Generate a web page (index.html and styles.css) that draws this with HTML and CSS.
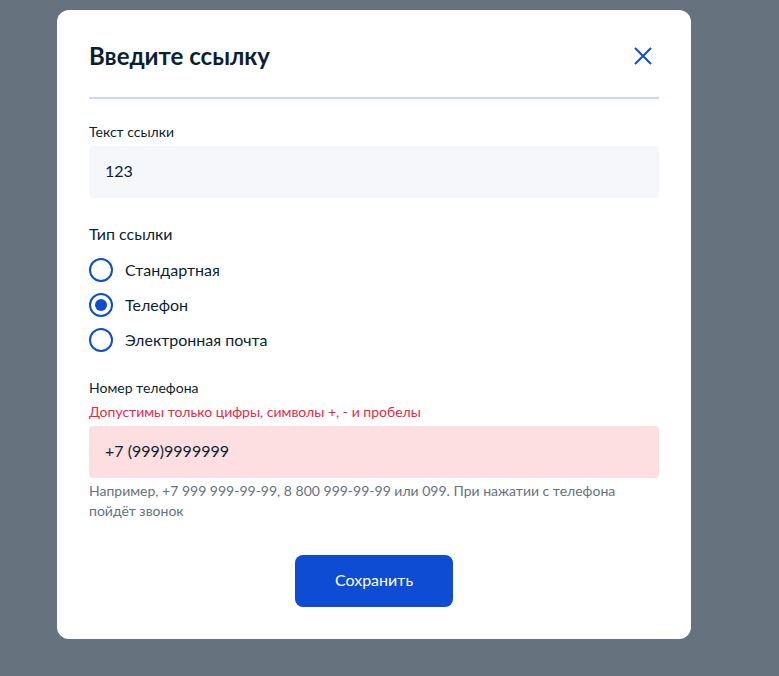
FILE: index.html
```html
<!DOCTYPE html>
<html>
<head>
    <title>Введите ссылку</title>
    <link rel="stylesheet" href="styles.css">
</head>
<body>
    <div class="modal">
        <div class="modal-header">
            <h2 class="modal-title">Введите ссылку</h2>
            <button type="button" class="close-btn" aria-label="Закрыть">
                <svg width="18" height="18" viewBox="0 0 18 18">
                    <path d="M1 1L17 17M17 1L1 17" stroke="#0d4cd3" stroke-width="2" fill="none"/>
                </svg>
            </button>
        </div>

        <form class="link-form">
            <label class="field-label" for="linkText">Текст ссылки</label>
            <input class="text-input" type="text" id="linkText" value="123">

            <div class="group-title">Тип ссылки</div>
            <div class="radio-list">
                <label class="radio-row">
                    <input type="radio" name="linkType" value="standard">
                    <span class="radio-mark"></span>
                    <span>Стандартная</span>
                </label>
                <label class="radio-row">
                    <input type="radio" name="linkType" value="phone" checked>
                    <span class="radio-mark"></span>
                    <span>Телефон</span>
                </label>
                <label class="radio-row">
                    <input type="radio" name="linkType" value="email">
                    <span class="radio-mark"></span>
                    <span>Электронная почта</span>
                </label>
            </div>

            <label class="field-label phone-label" for="phone">Номер телефона</label>
            <div class="error-text">Допустимы только цифры, символы +, - и пробелы</div>
            <input class="text-input has-error" type="text" id="phone" value="+7 (999)9999999">
            <p class="hint">Например, +7 999 999-99-99, 8 800 999-99-99 или 099. При нажатии с телефона пойдёт звонок</p>

            <div class="actions">
                <button type="button" class="save-btn">Сохранить</button>
            </div>
        </form>
    </div>
</body>
</html>
```

FILE: styles.css
```css
body {
    margin: 0;
    height: 676px;
    background: #66737f;
    font-family: Lato, "Noto Sans", sans-serif;
    color: #0b1f33;
    overflow: hidden;
}

.modal {
    width: 570px;
    margin: 10px 0 0 57px;
    padding: 32px;
    background: #fff;
    border-radius: 12px;
}

.modal-header {
    display: flex;
    align-items: center;
    justify-content: space-between;
    padding-bottom: 27px;
    border-bottom: 2px solid #ccd7f0;
}

.modal-title {
    margin: 0;
    font-size: 24px;
    line-height: 28px;
    font-weight: 700;
    color: #0b1f33;
}

.close-btn {
    display: flex;
    padding: 0;
    margin-right: 7px;
    border: none;
    background: none;
    cursor: pointer;
}

.link-form {
    display: flex;
    flex-direction: column;
    padding-top: 23px;
}

.field-label {
    font-size: 14px;
    line-height: 20px;
    margin-bottom: 4px;
}

.text-input {
    height: 52px;
    box-sizing: border-box;
    padding: 0 16px 3px;
    border: none;
    border-radius: 4px;
    background: #f5f7fa;
    font-family: Lato, "Noto Sans", sans-serif;
    font-size: 16px;
    color: #0b1f33;
    outline: none;
}

.text-input.has-error {
    background: #fddfe2;
}

.group-title {
    margin-top: 24px;
    font-size: 16px;
    line-height: 24px;
}

.radio-list {
    display: flex;
    flex-direction: column;
    gap: 11px;
    margin-top: 12px;
}

.radio-row {
    display: flex;
    align-items: center;
    gap: 12px;
    font-size: 16px;
    line-height: 24px;
    cursor: pointer;
}

.radio-row input {
    display: none;
}

.radio-mark {
    width: 24px;
    height: 24px;
    box-sizing: border-box;
    border: 2px solid #0d4cd3;
    border-radius: 50%;
    display: flex;
    align-items: center;
    justify-content: center;
}

.radio-row input:checked + .radio-mark::after {
    content: "";
    width: 12px;
    height: 12px;
    border-radius: 50%;
    background: #0d4cd3;
}

.phone-label {
    margin-top: 26px;
}

.error-text {
    font-size: 14px;
    line-height: 20px;
    color: #ee2746;
    margin-bottom: 4px;
}

.hint {
    margin: 3px 0 0;
    font-size: 14px;
    line-height: 20px;
    color: #66727f;
}

.actions {
    display: flex;
    justify-content: center;
    margin-top: 34px;
}

.save-btn {
    width: 158px;
    height: 52px;
    padding: 0 0 3px;
    border: none;
    border-radius: 8px;
    background: #0d4cd3;
    color: #fff;
    font-family: Lato, "Noto Sans", sans-serif;
    font-size: 16px;
    cursor: pointer;
}
```
